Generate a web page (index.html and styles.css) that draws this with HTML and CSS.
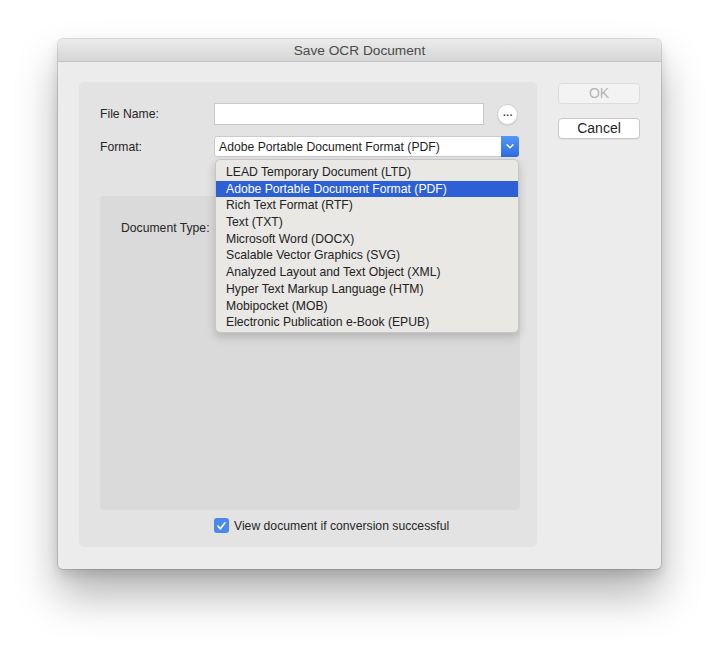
FILE: index.html
```html
<!DOCTYPE html>
<html>
<head>
<meta charset="utf-8">
<link rel="stylesheet" href="styles.css">
</head>
<body>
<div class="window">
  <div class="titlebar">Save OCR Document</div>
  <div class="content">
    <div class="group">
      <div class="row">
        <div class="label">File Name:</div>
        <div class="textfield"></div>
        <div class="ellipsis">...</div>
      </div>
      <div class="row row-format">
        <div class="label">Format:</div>
        <div class="popup">
          <div class="popup-value">Adobe Portable Document Format (PDF)</div>
          <div class="popup-arrow">
            <svg width="10" height="7" viewBox="0 0 10 7"><path d="M2 1.8 L5 4.8 L8 1.8" fill="none" stroke="#fff" stroke-width="1.5" stroke-linecap="round" stroke-linejoin="round"/></svg>
          </div>
          <div class="menu">
            <div class="item">LEAD Temporary Document (LTD)</div>
            <div class="item selected">Adobe Portable Document Format (PDF)</div>
            <div class="item">Rich Text Format (RTF)</div>
            <div class="item">Text (TXT)</div>
            <div class="item">Microsoft Word (DOCX)</div>
            <div class="item">Scalable Vector Graphics (SVG)</div>
            <div class="item">Analyzed Layout and Text Object (XML)</div>
            <div class="item">Hyper Text Markup Language (HTM)</div>
            <div class="item">Mobipocket (MOB)</div>
            <div class="item">Electronic Publication e-Book (EPUB)</div>
          </div>
        </div>
      </div>
      <div class="doctype">
        <div class="label doc-label">Document Type:</div>
      </div>
      <div class="check-row">
        <div class="checkbox">
          <svg width="11" height="10" viewBox="0 0 11 10"><path d="M2 5.2 L4.4 7.8 L9 1.8" fill="none" stroke="#fff" stroke-width="1.7" stroke-linecap="round" stroke-linejoin="round"/></svg>
        </div>
        <div class="check-label">View document if conversion successful</div>
      </div>
    </div>
    <div class="buttons">
      <div class="btn btn-disabled">OK</div>
      <div class="btn">Cancel</div>
    </div>
  </div>
</div>
</body>
</html>
```
FILE: styles.css
```css
* { box-sizing: border-box; }
html, body { margin: 0; padding: 0; background: #ffffff; }
body {
  font-family: "Liberation Sans", Arial, sans-serif;
  font-size: 12.2px;
  color: #222;
  padding: 39px 0 0 58px;
  height: 646px;
}
.window {
  width: 603px;
  height: 530px;
  background: #ececec;
  border-radius: 5px;
  box-shadow: 0 0 0 1px rgba(0,0,0,0.12), 0 26px 44px rgba(0,0,0,0.3), 0 6px 12px rgba(0,0,0,0.12);
}
.titlebar {
  height: 23px;
  line-height: 23px;
  text-align: center;
  font-size: 13.7px;
  color: #4a4a4a;
  background: linear-gradient(#ebebeb, #d6d6d6);
  border-bottom: 1px solid #c4c4c4;
  border-radius: 5px 5px 0 0;
}
.content {
  display: flex;
  gap: 21px;
  padding: 20px 21px 21px 21px;
}
.group {
  width: 458px;
  height: 465px;
  background: #e3e3e3;
  border-radius: 5px;
  padding: 21px 17px 0 21px;
  display: flex;
  flex-direction: column;
}
.row {
  display: flex;
  align-items: center;
  height: 22px;
}
.row-format {
  margin-top: 11px;
  height: 21px;
}
.label {
  width: 114px;
  flex: none;
  color: #262626;
}
.textfield {
  width: 270px;
  height: 22px;
  background: #fff;
  border: 1px solid #c9c9c9;
}
.ellipsis {
  width: 21px;
  height: 21px;
  margin-left: 13px;
  border-radius: 50%;
  background: #fff;
  border: 1px solid #cfcfcf;
  box-shadow: 0 1px 1px rgba(0,0,0,0.08);
  color: #444;
  font-size: 10px;
  font-weight: bold;
  line-height: 16px;
  text-align: center;
  letter-spacing: 0.5px;
  padding-left: 1px;
}
.popup {
  position: relative;
  width: 305px;
  height: 21px;
  display: flex;
  background: #fff;
  border: 1px solid #cbcbcb;
  border-radius: 3px;
}
.popup-value {
  flex: 1;
  line-height: 20px;
  padding-left: 4px;
  color: #1e1e1e;
}
.popup-arrow {
  width: 18px;
  margin: -1px -1px -1px 0;
  background: linear-gradient(#5596f6, #2c6ce0);
  border-radius: 0 3px 3px 0;
  display: flex;
  align-items: center;
  justify-content: center;
}
.menu {
  position: absolute;
  top: 22px;
  left: 0px;
  width: 304px;
  height: 174px;
  padding: 4px 0 3px 0;
  background: #e9e8e5;
  border: 1px solid #c6c6c6;
  border-radius: 5px;
  box-shadow: 0 4px 10px rgba(0,0,0,0.18);
  z-index: 5;
}
.item {
  height: 16.7px;
  line-height: 16.7px;
  padding-left: 10px;
  color: #222;
  white-space: nowrap;
}
.item.selected {
  background: #2d5fd5;
  color: #fff;
}
.doctype {
  margin-top: 39px;
  height: 314px;
  background: #dadada;
  border-radius: 4px;
  padding: 24px 0 0 21px;
}
.doc-label {
  width: auto;
  line-height: 16px;
}
.check-row {
  display: flex;
  align-items: center;
  margin-top: 8px;
  margin-left: 114px;
  height: 15px;
}
.checkbox {
  width: 15px;
  height: 15px;
  border-radius: 3px;
  background: #4b88ee;
  display: flex;
  align-items: center;
  justify-content: center;
}
.check-label {
  margin-left: 5px;
  color: #262626;
}
.buttons {
  display: flex;
  flex-direction: column;
  gap: 14px;
  padding-top: 1px;
}
.btn {
  width: 82px;
  height: 21px;
  line-height: 19px;
  text-align: center;
  background: #fff;
  border: 1px solid #c8c8c8;
  border-radius: 4px;
  box-shadow: 0 1px 1px rgba(0,0,0,0.06);
  color: #1f1f1f;
  font-size: 14px;
}
.btn-disabled {
  background: #f3f3f3;
  border-color: #dcdcdc;
  color: #b4b4b4;
  box-shadow: none;
}
```
